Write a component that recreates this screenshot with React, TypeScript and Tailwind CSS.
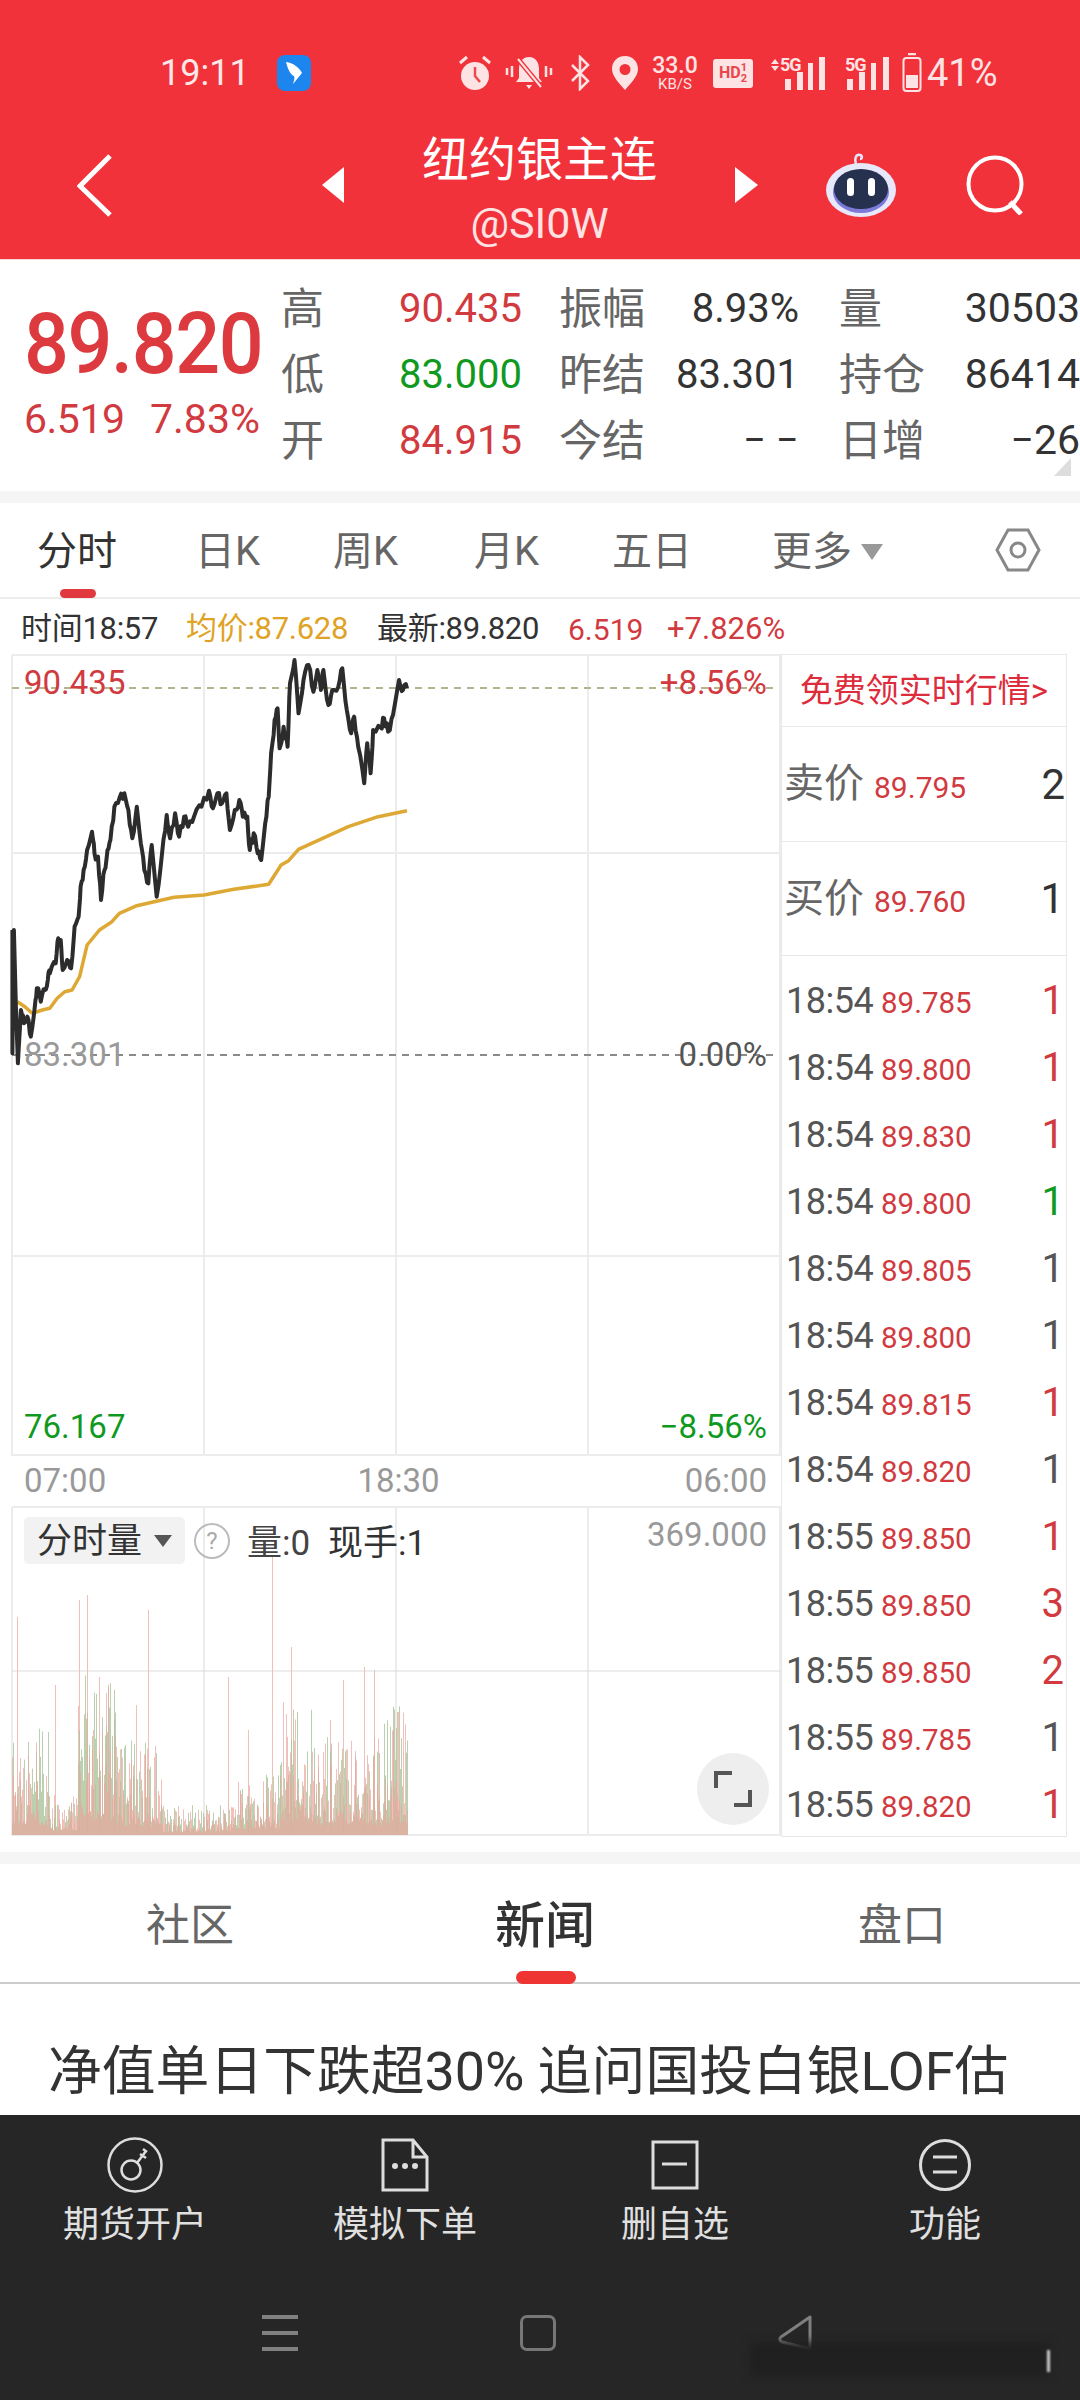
import React from "react";

const RED = "text-[#d13a3f]";

const blackPts = [
  [25,870],[25,1240],[28,870],[32,1100],[36,1270],[42,1110],[48,1150],[55,1130],[62,1190],[70,1100],[74,1045],[82,1085],[90,1050],[96,1020],[100,1000],[112,970],[117,895],[122,900],[126,990],[135,960],[143,985],[150,860],[158,830],[162,740],[168,690],[175,630],[185,575],[190,640],[197,650],[203,780],[210,690],[216,630],[222,600],[230,500],[240,475],[250,460],[258,510],[266,595],[275,500],[283,610],[290,690],[298,730],[305,615],[315,770],[325,650],[335,525],[342,595],[352,520],[360,590],[370,530],[378,560],[390,530],[405,500],[420,452],[428,505],[437,460],[446,490],[455,460],[462,570],[472,510],[481,480],[488,530],[497,530],[502,630],[510,580],[518,640],[525,660],[533,550],[540,470],[545,340],[552,240],[558,205],[562,325],[570,260],[578,320],[583,130],[592,60],[600,220],[610,120],[620,75],[630,155],[638,90],[645,150],[650,90],[660,195],[668,150],[680,140],[688,85],[697,210],[706,280],[712,230],[720,320],[732,430],[738,310],[745,400],[750,270],[765,262],[772,235],[780,275],[790,225],[802,120],[810,150],[818,145],
];
const avgPts = [
  [35,1085],[50,1100],[65,1120],[85,1110],[100,1105],[115,1075],[130,1055],[145,1050],[160,1010],[175,915],[200,870],[225,845],[240,820],[275,797],[310,785],[350,772],[410,765],[470,748],[540,733],[565,675],[580,662],[600,628],[700,560],[760,530],[818,512],
];

const noise = (i: number) => Math.abs(Math.sin(i * 12.9898) * 43758.5453) % 1;

// zoomed coordinates -> chart coordinates
const toPath = (pts: number[][]) =>
  pts.map(([x, y], i) => `${i ? "L" : "M"}${(x / 2.01).toFixed(1)} ${(640 + y / 3 - 654).toFixed(1)}`).join(" ");

// the price line wobbles a bit between the points read off the picture
const roughen = (pts: number[][]) => {
  const out: number[][] = [];
  pts.forEach((p, i) => {
    out.push(p);
    const next = pts[i + 1];
    if (i > 3 && next) {
      out.push([p[0] + (next[0] - p[0]) * 0.35, p[1] + (next[1] - p[1]) * 0.35 + (noise(i) - 0.5) * 30]);
      out.push([p[0] + (next[0] - p[0]) * 0.7, p[1] + (next[1] - p[1]) * 0.7 + (noise(i + 50) - 0.5) * 30]);
    }
  });
  return out;
};

const spikes: Record<number, number> = { 17: 218, 79: 235, 87: 240, 99: 158, 148: 225, 228: 158, 272: 278, 291: 188, 343: 155, 364: 168, 374: 165, 397: 123, 55: 150, 136: 130, 114: 115, 330: 115, 248: 105 };

function baseHeight(x: number) {
  if (x < 37) return 95;
  if (x < 65) return 40;
  if (x < 105) return 150;
  if (x < 150) return 85;
  if (x < 225) return 28;
  if (x < 268) return 55;
  if (x < 300) return 140;
  if (x < 370) return 95;
  return 120;
}

const bars = Array.from({ length: 396 }, (_, i) => {
  const r = noise(i);
  const r2 = noise(i + 400);
  return {
    x: 12 + i,
    h: baseHeight(i) * (0.12 + r * r * 1.0),
    h2: baseHeight(i) * (0.1 + r2 * r2 * 0.95),
    spike: spikes[i + 12],
  };
});

const trades = [
  ["18:54", "89.785", "1", "r"],
  ["18:54", "89.800", "1", "r"],
  ["18:54", "89.830", "1", "r"],
  ["18:54", "89.800", "1", "g"],
  ["18:54", "89.805", "1", "n"],
  ["18:54", "89.800", "1", "n"],
  ["18:54", "89.815", "1", "r"],
  ["18:54", "89.820", "1", "n"],
  ["18:55", "89.850", "1", "r"],
  ["18:55", "89.850", "3", "r"],
  ["18:55", "89.850", "2", "r"],
  ["18:55", "89.785", "1", "n"],
  ["18:55", "89.820", "1", "r"],
];

const StatusIcons = () => (
  <div className="flex items-center ml-[147px] text-[#fde3e3]">
    <svg width="34" height="36" viewBox="0 0 34 36" className="shrink-0">
      <circle cx="17" cy="21" r="14" fill="#fde3e3" />
      <path d="M17 12v9l5 6" stroke="#ee4a50" strokeWidth="2.5" fill="none" />
      <path d="M2 8l7-6M32 8l-7-6" stroke="#fde3e3" strokeWidth="3" />
    </svg>
    <svg width="48" height="36" viewBox="0 0 48 36" className="ml-[13px] shrink-0">
      <path d="M24 2c-7 0-10 6-10 12v9l-3 4h26l-3-4v-9c0-6-3-12-10-12z" fill="#fde3e3" />
      <path d="M21 30h6l-3 4z" fill="#fde3e3" />
      <path d="M13 4l23 28" stroke="#f1323b" strokeWidth="5" />
      <path d="M13 4l23 28" stroke="#fde3e3" strokeWidth="2" />
      <path d="M2 13v7M7 11v11M41 11v11M46 13v7" stroke="#fde3e3" strokeWidth="2.5" />
    </svg>
    <svg width="20" height="36" viewBox="0 0 20 36" className="ml-[17px] shrink-0">
      <path d="M2 10l16 16-8 8V2l8 8L2 26" stroke="#fde3e3" strokeWidth="2.5" fill="none" />
    </svg>
    <svg width="28" height="36" viewBox="0 0 28 36" className="ml-[21px] shrink-0">
      <path fillRule="evenodd" d="M14 1c8 0 13 6 13 13 0 8-9 16-13 21C10 30 1 22 1 14 1 7 6 1 14 1zm0 8a5.500 5.500 0 100 11 5.500 5.500 0 000-11z" fill="#fde3e3" />
    </svg>
    <div className="ml-[12px] w-[48px] flex flex-col items-center font-medium">
      <span className="text-[23px] leading-[22px] h-[22px]">33.0</span>
      <span className="text-[15px] leading-[15px] h-[15px] font-normal">KB/S</span>
    </div>
    <div className="ml-[14px] w-[40px] h-[29px] rounded-[3px] bg-[#fde3e3] text-[#e8474d] flex items-center justify-center text-[16px] font-bold leading-none">
      HD<span className="text-[11px] leading-[11px] text-center">1<br />2</span>
    </div>
    <div className="ml-[15px] relative w-[59px] h-[36px] shrink-0">
      <svg width="59" height="36" viewBox="0 0 59 36" className="absolute inset-0">
        <path d="M3 9l4-5 4 5zM3 11l4 5 4-5z" fill="#fde3e3" />
        <path d="M17 24h6v11h-6z" fill="#fde3e3" />
        <path d="M29 17h6v18h-6zM40 8h5v27h-5zM51 2h6v33h-6z" fill="#fde3e3" />
      </svg>
      <span className="absolute left-[12px] top-0 text-[18px] font-bold leading-[20px] tracking-[-1px]">5G</span>
    </div>
    <div className="ml-[18px] relative w-[45px] h-[36px] shrink-0">
      <svg width="45" height="36" viewBox="0 0 45 36" className="absolute inset-0">
        <path d="M2 24h6v11H2zM14 17h6v18h-6zM26 8h5v27h-5zM38 2h6v33h-6z" fill="#fde3e3" />
      </svg>
      <span className="absolute left-0 top-0 text-[18px] font-bold leading-[20px] tracking-[-1px]">5G</span>
    </div>
    <svg width="20" height="40" viewBox="0 0 20 40" className="ml-[12px] shrink-0">
      <path d="M6 1h8" stroke="#fde3e3" strokeWidth="2.500" />
      <rect x="1.500" y="5" width="17" height="33" rx="3" fill="none" stroke="#fde3e3" strokeWidth="2" />
      <rect x="4" y="22" width="12" height="13" fill="#fde3e3" />
    </svg>
    <span className="ml-[5px] text-[38px] leading-none">41%</span>
  </div>
);

const Robot = () => (
  <svg width="72" height="66" viewBox="0 0 72 66">
    <path d="M31 12c-2-5 0-10 4-9 3 1 2 4 0 4" stroke="#e6e6fa" strokeWidth="2.500" fill="none" />
    <ellipse cx="36" cy="38" rx="35" ry="27" fill="#e8e8fb" />
    <ellipse cx="36" cy="40" rx="28" ry="21" fill="#7c79d8" />
    <ellipse cx="36" cy="37" rx="27" ry="20" fill="#26304f" />
    <rect x="22" y="26" width="7" height="18" rx="3.500" fill="#fff" />
    <rect x="43" y="26" width="7" height="18" rx="3.500" fill="#fff" />
  </svg>
);

const QuoteRow = ({ label, value, color, mid, midValue, right, rightValue }: { label: string; value: string; color: string; mid: string; midValue: string; right: string; rightValue: string }) => (
  <div className="flex items-center h-[66px] whitespace-nowrap">
    <span className="w-[118px] text-[43px] text-[#666]">{label}</span>
    <span className={`w-[121px] text-[40px] ${color}`}>{value}</span>
    <div className="ml-[39px] w-[240px] flex justify-between items-center">
      <span className="text-[43px] text-[#666]">{mid}</span>
      <span className="text-[40px] text-[#333]">{midValue}</span>
    </div>
    <div className="ml-[40px] w-[241px] flex justify-between items-center">
      <span className="text-[43px] text-[#666]">{right}</span>
      <span className="text-[41px] text-[#333]">{rightValue}</span>
    </div>
  </div>
);

const NavItem = ({ icon, label }: { icon: React.ReactNode; label: string }) => (
  <div className="flex flex-col items-center">
    <div className="h-[56px] flex items-center justify-center">{icon}</div>
    <span className="mt-[10px] text-[36px] leading-[44px] text-[#e0e0e0]">{label}</span>
  </div>
);

export default function App() {
  return (
    <div className="relative w-[1080px] h-[2400px] overflow-hidden bg-white flex flex-col font-['Roboto','Noto_Sans_CJK_SC',sans-serif]">
      {/* red header */}
      <div className="h-[260px] shrink-0 bg-[#f1323b] text-white border-b border-[#f8d8d4]">
        <div className="flex items-center h-[46px] mt-[50px] text-[#fde8e8]">
          <span className="ml-[160px] w-[88px] text-[36px] leading-none whitespace-nowrap">19:11</span>
          <div className="ml-[29px] w-[34px] h-[36px] rounded-[8px] bg-[#1d86ee] flex items-center justify-center">
            <svg width="20" height="26" viewBox="0 0 20 26">
              <path d="M2 2c7 1 13 5 16 11l-9 11c1-4 2-6 1-8-3-1-6-6-8-14z" fill="#fff" />
            </svg>
          </div>
          <StatusIcons />
        </div>
        <div className="flex items-center h-[120px] mt-[29px]">
          <svg width="35" height="63" viewBox="0 0 35 63" className="ml-[77px] shrink-0">
            <path d="M33 2L3 32l30 29" stroke="#fff" strokeWidth="5" fill="none" />
          </svg>
          <div className="ml-[210px] w-0 h-0 border-y-[18px] border-y-transparent border-r-[22px] border-r-white shrink-0" />
          <div className="w-[391px] h-[120px] flex flex-col items-center pt-[11px]">
            <span className="text-[47px] leading-[48px]">纽约银主连</span>
            <span className="mt-[17px] text-[43px] leading-[44px] text-[#ffe3e3]">@SI0W</span>
          </div>
          <div className="w-0 h-0 border-y-[18px] border-y-transparent border-l-[23px] border-l-white shrink-0" />
          <div className="ml-[67px] shrink-0"><Robot /></div>
          <svg width="60" height="60" viewBox="0 0 60 60" className="ml-[69px] shrink-0">
            <circle cx="29" cy="29" r="26.500" stroke="#fff" strokeWidth="4" fill="none" />
            <path d="M44 47l11 12" stroke="#fff" strokeWidth="5" />
          </svg>
        </div>
      </div>

      {/* quote */}
      <div className="relative h-[231px] shrink-0 flex">
        <div className="w-[281px] shrink-0 pl-[24px] pt-[36px]">
          <div className="text-[85px] leading-[96px] font-medium text-[#dc3a3e] tracking-[-1.500px] whitespace-nowrap scale-x-[0.93] origin-left">89.820</div>
          <div className="mt-[4px] flex text-[41px] leading-[46px] text-[#d13a3f] whitespace-nowrap">
            <span className="w-[126px] tracking-[-0.5px]">6.519</span>
            <span>7.83%</span>
          </div>
        </div>
        <div className="pt-[16px]">
          <QuoteRow label="高" value="90.435" color={RED} mid="振幅" midValue="8.93%" right="量" rightValue="30503" />
          <QuoteRow label="低" value="83.000" color="text-[#0f9a1f]" mid="昨结" midValue="83.301" right="持仓" rightValue="86414" />
          <QuoteRow label="开" value="84.915" color={RED} mid="今结" midValue="− −" right="日增" rightValue="−26" />
        </div>
        <div className="absolute left-[1054px] top-[198px] w-0 h-0 border-l-[17px] border-l-transparent border-b-[18px] border-b-[#ddd]" />
      </div>
      <div className="h-[12px] shrink-0 bg-[#f5f5f5]" />

      {/* period tabs */}
      <div className="relative h-[96px] shrink-0 flex items-center pt-[4px] border-b-2 border-[#ececec] text-[40px] text-[#666] whitespace-nowrap">
        <span className="ml-[37px] w-[158px] text-[#333]">分时</span>
        <span className="w-[138px]">日K</span>
        <span className="w-[141px]">周K</span>
        <span className="w-[138px]">月K</span>
        <span className="w-[160px]">五日</span>
        <span className="w-[89px]">更多</span>
        <div className="w-0 h-0 border-x-[11px] border-x-transparent border-t-[16px] border-t-[#999]" />
        <svg width="46" height="46" viewBox="0 0 46 46" className="ml-[112px] mt-[-4px]">
          <path d="M13 3h20l11 20-11 20H13L2 23z" stroke="#888" strokeWidth="3" fill="none" />
          <circle cx="23" cy="23" r="7" stroke="#888" strokeWidth="3" fill="none" />
        </svg>
        <div className="absolute left-[60px] bottom-[-1px] w-[36px] h-[9px] rounded-full bg-[#e03a3e]" />
      </div>

      {/* info row */}
      <div className="h-[55px] shrink-0 flex items-center pt-[5px] whitespace-nowrap">
        <span className="ml-[21px] w-[165px] text-[#333] text-[31px] tracking-[-0.3px]">时间18:57</span>
        <span className="w-[191px] text-[#dfa326] text-[31px] tracking-[-0.3px]">均价:87.628</span>
        <span className="w-[191px] text-[#333] text-[31px] tracking-[-0.3px]">最新:89.820</span>
        <span className={`w-[99px] text-[30px] ${RED}`}>6.519</span>
        <span className={`text-[31px] ${RED}`}>+7.826%</span>
      </div>

      {/* chart + ticks */}
      <div className="flex h-[1184px] shrink-0">
        <div className="w-[781px] shrink-0 flex flex-col">
          {/* price chart */}
          <div className="relative h-[802px]">
            <svg width="781" height="802" className="absolute inset-0">
              <g stroke="#ececec" strokeWidth="2">
                <path d="M12 1H781M12 199H781M12 602H781M12 801H781" />
                <path d="M12 1V802M204 1V802M396 1V802M588 1V802M780 1V802" />
              </g>
              <path d="M12 34H775" stroke="#b6b48e" strokeWidth="2" strokeDasharray="7 6" />
              <path d="M12 401H775" stroke="#8a8a8a" strokeWidth="2" strokeDasharray="7 6" />
              <path d={toPath(avgPts)} stroke="#dda833" strokeWidth="3.500" fill="none" strokeLinejoin="round" />
              <path d={toPath(roughen(blackPts))} stroke="#2c2c2c" strokeWidth="4" fill="none" strokeLinejoin="round" />
            </svg>
            <span className={`absolute left-[24px] top-[11px] text-[33px] leading-[36px] ${RED}`}>90.435</span>
            <span className={`absolute right-[14px] top-[11px] text-[33px] leading-[36px] ${RED}`}>+8.56%</span>
            <span className="absolute left-[24px] top-[383px] text-[33px] leading-[36px] text-[#999]">83.301</span>
            <span className="absolute right-[14px] top-[383px] text-[33px] leading-[36px] text-[#555]">0.00%</span>
            <span className="absolute left-[24px] top-[755px] text-[33px] leading-[36px] text-[#0f9a1f]">76.167</span>
            <span className="absolute right-[14px] top-[755px] text-[33px] leading-[36px] text-[#0f9a1f]">−8.56%</span>
          </div>
          {/* time axis */}
          <div className="h-[50px] flex items-center justify-between pl-[24px] pr-[14px] text-[33px] text-[#999]">
            <span>07:00</span>
            <span className="ml-[6px]">18:30</span>
            <span>06:00</span>
          </div>
          {/* volume chart */}
          <div className="relative h-[330px]">
            <svg width="781" height="330" className="absolute inset-0">
              <g stroke="#ececec" strokeWidth="2">
                <path d="M12 1H781M12 329H781" />
                <path d="M12 1V330M204 1V330M396 1V330M588 1V330M780 1V330" />
              </g>
              <path d="M12 165H781" stroke="#dcdcdc" strokeWidth="1" />
              {bars.map((b) => (
                <g key={b.x}>
                  {b.spike && <rect x={b.x} y={329 - b.spike} width="1" height={b.spike} fill="#eec0b8" />}
                  <rect x={b.x} y={329 - b.h} width="1" height={b.h} fill="#a9c49a" opacity="0.8" />
                  <rect x={b.x} y={329 - b.h2} width="1" height={b.h2} fill="#e8a79c" opacity="0.7" />
                </g>
              ))}
            </svg>
            <div className="absolute left-[24px] top-[11px] w-[161px] h-[47px] rounded-[5px] bg-[#f2f2f2] flex items-center pl-[13px] pt-[4px] text-[35px] text-[#333]">
              分时量
              <div className="ml-[12px] mt-[-4px] w-0 h-0 border-x-[9px] border-x-transparent border-t-[12px] border-t-[#555]" />
            </div>
            <div className="absolute left-[194px] top-[17px] w-[36px] h-[36px] rounded-full border-2 border-[#bbb] flex items-center justify-center text-[24px] leading-none text-[#aaa]">?</div>
            <span className="absolute left-[247px] top-[16px] text-[35px] leading-[44px] text-[#444]">量:0</span>
            <span className="absolute left-[328px] top-[16px] text-[35px] leading-[44px] text-[#333]">现手:1</span>
            <span className="absolute right-[14px] top-[11px] text-[33px] leading-[36px] text-[#999]">369.000</span>
            <div className="absolute left-[697px] top-[247px] w-[72px] h-[72px] rounded-full bg-[#eeeeee] flex items-center justify-center">
              <svg width="38" height="38" viewBox="0 0 38 38">
                <path d="M2 18V3h16M36 20v15H20" stroke="#555" strokeWidth="4" fill="none" />
              </svg>
            </div>
          </div>
        </div>

        {/* ticks panel */}
        <div className="w-[286px] shrink-0 h-[1183px] border border-[#e8e8e8] flex flex-col">
          <div className="h-[72px] shrink-0 flex items-center justify-center border-b border-[#e8e8e8] text-[33px] text-[#dd2c3c] whitespace-nowrap">免费领实时行情&gt;</div>
          <div className="h-[115px] shrink-0 flex items-center border-b border-[#e8e8e8] pl-[2px] pr-[1px]">
            <span className="text-[40px] text-[#666]">卖价</span>
            <span className={`ml-[10px] mt-[6px] text-[30px] ${RED}`}>89.795</span>
            <span className="ml-auto text-[42px] text-[#333]">2</span>
          </div>
          <div className="h-[114px] shrink-0 flex items-center border-b border-[#e8e8e8] pl-[2px] pr-[2px]">
            <span className="text-[40px] text-[#666]">买价</span>
            <span className={`ml-[10px] mt-[6px] text-[30px] ${RED}`}>89.760</span>
            <span className="ml-auto text-[42px] text-[#333]">1</span>
          </div>
          <div className="pt-[11px]">
            {trades.map(([t, p, q, c], i) => (
              <div key={i} className="h-[67px] flex items-center pl-[4px] pr-[2px]">
                <span className="w-[95px] text-[36px] text-[#555] tracking-[-0.5px]">{t}</span>
                <span className={`mt-[5px] text-[29.500px] ${RED}`}>{p}</span>
                <span className={`ml-auto text-[40px] ${c === "r" ? RED : c === "g" ? "text-[#0f9a1f]" : "text-[#555]"}`}>{q}</span>
              </div>
            ))}
          </div>
        </div>
      </div>

      <div className="mt-[14px] h-[12px] shrink-0 bg-[#f5f5f5]" />

      {/* news tabs */}
      <div className="relative h-[120px] shrink-0 border-b-2 border-[#ccc] flex items-center pt-[6px] text-[44px] text-[#666]">
        <span className="w-[356px] text-right pr-[122px]">社区</span>
        <span className="w-[378px] text-center text-[50px] font-medium text-[#333]">新闻</span>
        <span className="w-[346px] pl-[124px]">盘口</span>
        <div className="absolute left-[516px] bottom-[-2px] w-[60px] h-[13px] rounded-full bg-[#ee3533]" />
      </div>
      <div className="h-[131px] shrink-0 pl-[48px] pt-[56px] text-[53.800px] leading-[64px] text-[#333] whitespace-nowrap">净值单日下跌超30% 追问国投白银LOF估</div>

      {/* bottom bar */}
      <div className="flex-1 bg-[#262626] flex flex-col">
        <div className="grid grid-cols-4 pt-[22px]">
          <NavItem
            label="期货开户"
            icon={
              <svg width="56" height="56" viewBox="0 0 56 56" fill="none" stroke="#ddd" strokeWidth="2.500">
                <circle cx="28" cy="28" r="26.500" />
                <circle cx="24" cy="33" r="9.500" />
                <path d="M30 26l9-12M33 17l6 4M36 12l4 3" />
              </svg>
            }
          />
          <NavItem
            label="模拟下单"
            icon={
              <svg width="48" height="54" viewBox="0 0 48 54" fill="none" stroke="#ddd" strokeWidth="3">
                <path d="M2 2h30l14 17v33H2zM32 2v17h14" />
                <circle cx="14" cy="28" r="1.500" fill="#ddd" />
                <circle cx="24" cy="28" r="1.500" fill="#ddd" />
                <circle cx="34" cy="28" r="1.500" fill="#ddd" />
              </svg>
            }
          />
          <NavItem
            label="删自选"
            icon={
              <svg width="48" height="50" viewBox="0 0 48 50" fill="none" stroke="#ddd" strokeWidth="3">
                <rect x="2" y="2" width="44" height="46" />
                <path d="M11 24h25" />
              </svg>
            }
          />
          <NavItem
            label="功能"
            icon={
              <svg width="52" height="52" viewBox="0 0 52 52" fill="none" stroke="#ddd" strokeWidth="3">
                <circle cx="26" cy="26" r="24.500" />
                <path d="M14 18h24M14 33h24" />
              </svg>
            }
          />
        </div>
        <div className="flex items-center h-[40px] mt-[66px]">
          <div className="ml-[262px] w-[36px] flex flex-col gap-[12px]">
            <div className="h-[4px] bg-[#808080]" />
            <div className="h-[4px] bg-[#808080]" />
            <div className="h-[4px] bg-[#808080]" />
          </div>
          <div className="ml-[222px] w-[36px] h-[36px] rounded-[7px] border-[3px] border-[#777]" />
          <svg width="36" height="36" viewBox="0 0 36 36" className="ml-[222px]">
            <path d="M32 2L3 22c-2 2-1 4 1 5l28 7z" stroke="#808080" strokeWidth="3" fill="none" strokeLinejoin="round" />
          </svg>
        </div>
      </div>
      {/* smudged watermark */}
      <div className="absolute left-[750px] top-[2342px] w-[300px] h-[34px] bg-[#202020] blur-[4px]" />
      <div className="absolute left-[1047px] top-[2350px] w-[3px] h-[22px] bg-[#cfcfcf] blur-[1px]" />
    </div>
  );
}
